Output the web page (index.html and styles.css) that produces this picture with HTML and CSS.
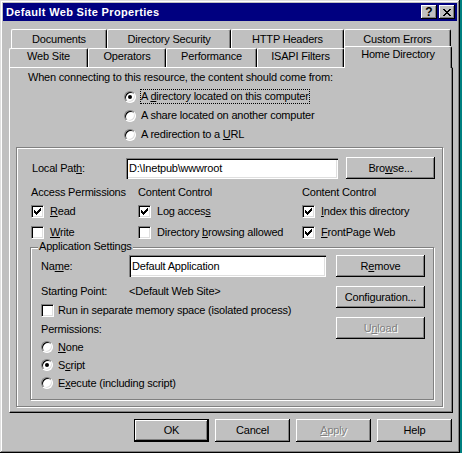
FILE: index.html
```html
<!DOCTYPE html>
<html>
<head>
<meta charset="utf-8">
<title>Default Web Site Properties</title>
<link rel="stylesheet" href="styles.css">
</head>
<body>
<div class="window">
  <div class="titlebar">
    <span class="title">Default Web Site Properties</span>
    <div class="tbtns">
      <span class="tbtn qm">?</span>
      <span class="tbtn">
        <svg width="8" height="7" viewBox="0 0 8 7" shape-rendering="crispEdges"><path d="M0 0h2v1H0zM6 0h2v1H6zM1 1h2v1H1zM5 1h2v1H5zM2 2h4v1H2zM3 3h2v1H3zM2 4h4v1H2zM1 5h2v1H1zM5 5h2v1H5zM0 6h2v1H0zM6 6h2v1H6z" fill="#000"/></svg>
      </span>
    </div>
  </div>

  <div class="tabs">
    <div class="tabrow back">
      <div class="tab w-docs">Documents</div>
      <div class="tab w-dirsec">Directory Security</div>
      <div class="tab w-http">HTTP Headers</div>
      <div class="tab w-errors">Custom Errors</div>
    </div>
    <div class="tabrow front">
      <div class="tab w-site">Web Site</div>
      <div class="tab w-ops">Operators</div>
      <div class="tab w-perf">Performance</div>
      <div class="tab w-isapi">ISAPI Filters</div>
      <div class="tab sel w-home">Home Directory</div>
    </div>
  </div>

  <div class="panel">
    <div class="intro">When connecting to this resource, the content should come from:</div>
    <div class="source">
      <div class="opt"><span class="radio on"></span><span class="focus">A <u>d</u>irectory located on this computer</span></div>
      <div class="opt"><span class="radio"></span><span class="olabel">A share located on another computer</span></div>
      <div class="opt"><span class="radio"></span><span class="olabel">A redirection to a <u>U</u>RL</span></div>
    </div>

    <div class="group">
      <div class="pathrow">
        <span class="plabel">Local Pat<u>h</u>:</span>
        <div class="field w-path">D:\Inetpub\wwwroot</div>
        <div class="btn browse">Bro<u>w</u>se...</div>
      </div>

      <div class="optgrid">
        <div class="heading">Access Permissions</div>
        <div class="heading">Content Control</div>
        <div class="heading">Content Control</div>

        <div class="chk"><span class="box on"><svg width="7" height="7" viewBox="0 0 7 7" shape-rendering="crispEdges"><path d="M6 0h1v1H6zM5 1h2v1H5zM0 2h1v1H0zM4 2h3v1H4zM0 3h2v1H0zM3 3h3v1H3zM0 4h5v1H0zM1 5h3v1H1zM2 6h1v1H2z" fill="#000"/></svg></span><span><u>R</u>ead</span></div>
        <div class="chk"><span class="box on"><svg width="7" height="7" viewBox="0 0 7 7" shape-rendering="crispEdges"><path d="M6 0h1v1H6zM5 1h2v1H5zM0 2h1v1H0zM4 2h3v1H4zM0 3h2v1H0zM3 3h3v1H3zM0 4h5v1H0zM1 5h3v1H1zM2 6h1v1H2z" fill="#000"/></svg></span><span>Log acces<u>s</u></span></div>
        <div class="chk"><span class="box on"><svg width="7" height="7" viewBox="0 0 7 7" shape-rendering="crispEdges"><path d="M6 0h1v1H6zM5 1h2v1H5zM0 2h1v1H0zM4 2h3v1H4zM0 3h2v1H0zM3 3h3v1H3zM0 4h5v1H0zM1 5h3v1H1zM2 6h1v1H2z" fill="#000"/></svg></span><span><u>I</u>ndex this directory</span></div>

        <div class="chk"><span class="box"></span><span><u>W</u>rite</span></div>
        <div class="chk"><span class="box"></span><span>Directory <u>b</u>rowsing allowed</span></div>
        <div class="chk"><span class="box on"><svg width="7" height="7" viewBox="0 0 7 7" shape-rendering="crispEdges"><path d="M6 0h1v1H6zM5 1h2v1H5zM0 2h1v1H0zM4 2h3v1H4zM0 3h2v1H0zM3 3h3v1H3zM0 4h5v1H0zM1 5h3v1H1zM2 6h1v1H2z" fill="#000"/></svg></span><span><u>F</u>rontPage Web</span></div>
      </div>

      <div class="appgroup">
        <span class="legend">Application Settings</span>
        <div class="appbody">
          <div class="appleft">
            <div class="namerow">
              <span class="alabel">Na<u>m</u>e:</span>
              <div class="field w-name">Default Application</div>
            </div>
            <div class="startrow">
              <span class="alabel">Starting Point:</span>
              <span>&lt;Default Web Site&gt;</span>
            </div>
            <div class="chk arow"><span class="box"></span><span>Run in separate memory space (isolated process)</span></div>
            <div class="permlabel">Permissions:</div>
            <div class="aopt"><span class="radio"></span><span><u>N</u>one</span></div>
            <div class="aopt"><span class="radio on"></span><span>S<u>c</u>ript</span></div>
            <div class="aopt"><span class="radio"></span><span>E<u>x</u>ecute (including script)</span></div>
          </div>
          <div class="appright">
            <div class="btn">R<u>e</u>move</div>
            <div class="btn">Confi<u>g</u>uration...</div>
            <div class="btn disabled">U<u>n</u>load</div>
          </div>
        </div>
      </div>
    </div>
  </div>

  <div class="buttons">
    <div class="btn wide def">OK</div>
    <div class="btn wide">Cancel</div>
    <div class="btn wide disabled"><u>A</u>pply</div>
    <div class="btn wide">Help</div>
  </div>
</div>
</body>
</html>
```

FILE: styles.css
```css
* { box-sizing: border-box; }
html, body { margin: 0; padding: 0; }
body {
  width: 462px;
  height: 453px;
  overflow: hidden;
  background: #008080;
  font-family: "Liberation Sans", Arial, sans-serif;
  font-size: 11px;
  line-height: 13px;
  letter-spacing: -0.2px;
  color: #000;
}
u { text-decoration: underline; text-underline-offset: 1px; }

.window {
  width: 460px;
  height: 453px;
  background: #c0c0c0;
  padding: 3px;
  display: flex;
  flex-direction: column;
  box-shadow: inset -1px -1px #000, inset 1px 1px #dfdfdf, inset -2px -2px #808080, inset 2px 2px #fff;
}

/* title bar */
.titlebar {
  height: 18px;
  flex: none;
  background: #000080;
  color: #fff;
  display: flex;
  align-items: center;
  justify-content: space-between;
  padding: 0 2px 0 3px;
}
.title { font-weight: bold; letter-spacing: 0.35px; }
.tbtns { display: flex; gap: 2px; }
.tbtn {
  width: 16px;
  height: 14px;
  background: #c0c0c0;
  color: #000;
  display: flex;
  align-items: center;
  justify-content: center;
  box-shadow: inset -1px -1px #000, inset 1px 1px #fff, inset -2px -2px #808080;
}
.tbtn.qm { font-weight: bold; font-size: 12px; padding-top: 1px; letter-spacing: 0; }

/* tabs */
.tabs { margin: 8px 0 0 6px; height: 38px; flex: none; }
.tabrow { display: flex; height: 19px; }
.tabrow.back { padding-left: 2px; }
.tabrow.front { align-items: flex-end; }
.tab {
  height: 19px;
  flex: none;
  background: #c0c0c0;
  border-top: 1px solid #fff;
  border-left: 1px solid #fff;
  border-right: 1px solid #000;
  border-radius: 2px 2px 0 0;
  box-shadow: inset -1px 0 #808080;
  text-align: center;
  white-space: nowrap;
}
.back .tab { padding-top: 3px; }
.front .tab { padding-top: 1px; }
.tab.sel {
  height: 22px;
  margin-bottom: -1px;
  position: relative;
  z-index: 1;
}
.w-docs { width: 96px; }
.w-dirsec { width: 124px; }
.w-http { width: 113px; }
.w-errors { width: 107px; }
.w-site { width: 79px; }
.w-ops { width: 78px; }
.w-perf { width: 91px; }
.w-isapi { width: 87px; }
.w-home { width: 108px; }

/* panel */
.panel {
  height: 346px;
  flex: none;
  margin: 0 4px 0 6px;
  border-top: 1px solid #fff;
  border-left: 1px solid #fff;
  border-right: 1px solid #000;
  border-bottom: 1px solid #000;
  box-shadow: inset -1px -1px #808080;
  padding: 3px 0 0 6px;
}
.intro { margin-left: 12px; height: 13px; }
.source { margin: 3px 0 0 108px; }
.opt { height: 19px; display: flex; align-items: center; }
.olabel { margin-left: 5px; }
.focus { margin-left: 4px; border: 1px dotted #000; }

/* controls */
.radio {
  position: relative;
  width: 12px;
  height: 12px;
  flex: none;
  border-radius: 50%;
  background: #fff;
  border: 1px solid;
  border-color: #808080 #fff #fff #808080;
  box-shadow: inset 1px 1px #000, inset -1px -1px #dfdfdf;
}
.radio.on::after {
  content: "";
  position: absolute;
  left: 3px;
  top: 3px;
  width: 4px;
  height: 4px;
  border-radius: 50%;
  background: #000;
}
.box {
  width: 13px;
  height: 13px;
  flex: none;
  background: #fff;
  border: 1px solid;
  border-color: #808080 #fff #fff #808080;
  box-shadow: inset 1px 1px #000, inset -1px -1px #dfdfdf;
  padding: 2px 0 0 2px;
  display: flex;
}
.field {
  height: 21px;
  background: #fff;
  padding: 0 0 0 3px;
  display: flex;
  align-items: center;
  white-space: nowrap;
  box-shadow: inset 1px 1px #808080, inset 2px 2px #000, inset -1px -1px #fff, inset -2px -2px #dfdfdf;
}
.btn {
  width: 89px;
  height: 22px;
  flex: none;
  background: #c0c0c0;
  display: flex;
  align-items: center;
  justify-content: center;
  white-space: nowrap;
  box-shadow: inset -1px -1px #000, inset 1px 1px #fff, inset -2px -2px #808080;
}
.btn.disabled { color: #808080; text-shadow: 1px 1px #fff; }
.btn.wide { width: 75px; height: 23px; }
.btn.def { border: 1px solid #000; }

/* outer group */
.group {
  width: 427px;
  height: 260px;
  margin-top: 3px;
  border: 1px solid #808080;
  box-shadow: inset 1px 1px #fff, 1px 1px #fff;
  padding: 9px 0 0 13px;
}
.pathrow { display: flex; align-items: center; height: 22px; margin-left: 2px; }
.plabel { width: 94px; flex: none; }
.w-path { width: 212px; }
.browse { margin-left: 8px; }

.optgrid {
  display: grid;
  grid-template-columns: 107px 164px 1fr;
  grid-template-rows: 18px 21px 21px;
  margin: 4px 0 0 1px;
}
.heading { display: flex; align-items: center; }
.chk { display: flex; align-items: center; gap: 6px; white-space: nowrap; }

/* application settings */
.appgroup {
  position: relative;
  width: 404px;
  height: 153px;
  margin-top: 4px;
  border: 1px solid #808080;
  box-shadow: inset 1px 1px #fff, 1px 1px #fff;
  padding: 7px 7px 0 10px;
}
.legend {
  position: absolute;
  left: 7px;
  top: -8px;
  padding: 0 1px;
  background: #c0c0c0;
}
.appbody { display: flex; gap: 10px; }
.appleft { width: 285px; flex: none; }
.appright { display: flex; flex-direction: column; gap: 9px; }
.namerow { display: flex; align-items: center; height: 22px; }
.alabel { width: 88px; flex: none; }
.w-name { width: 197px; height: 22px; }
.startrow { display: flex; align-items: center; height: 18px; margin-top: 5px; }
.chk.arow { height: 18px; margin-top: 1px; gap: 4px; }
.permlabel { height: 17px; margin-top: 2px; display: flex; align-items: center; }
.aopt { height: 18px; display: flex; align-items: center; gap: 5px; }

/* bottom buttons */
.buttons {
  display: flex;
  justify-content: flex-end;
  gap: 6px;
  margin: 6px 5px 0 0;
}
```
